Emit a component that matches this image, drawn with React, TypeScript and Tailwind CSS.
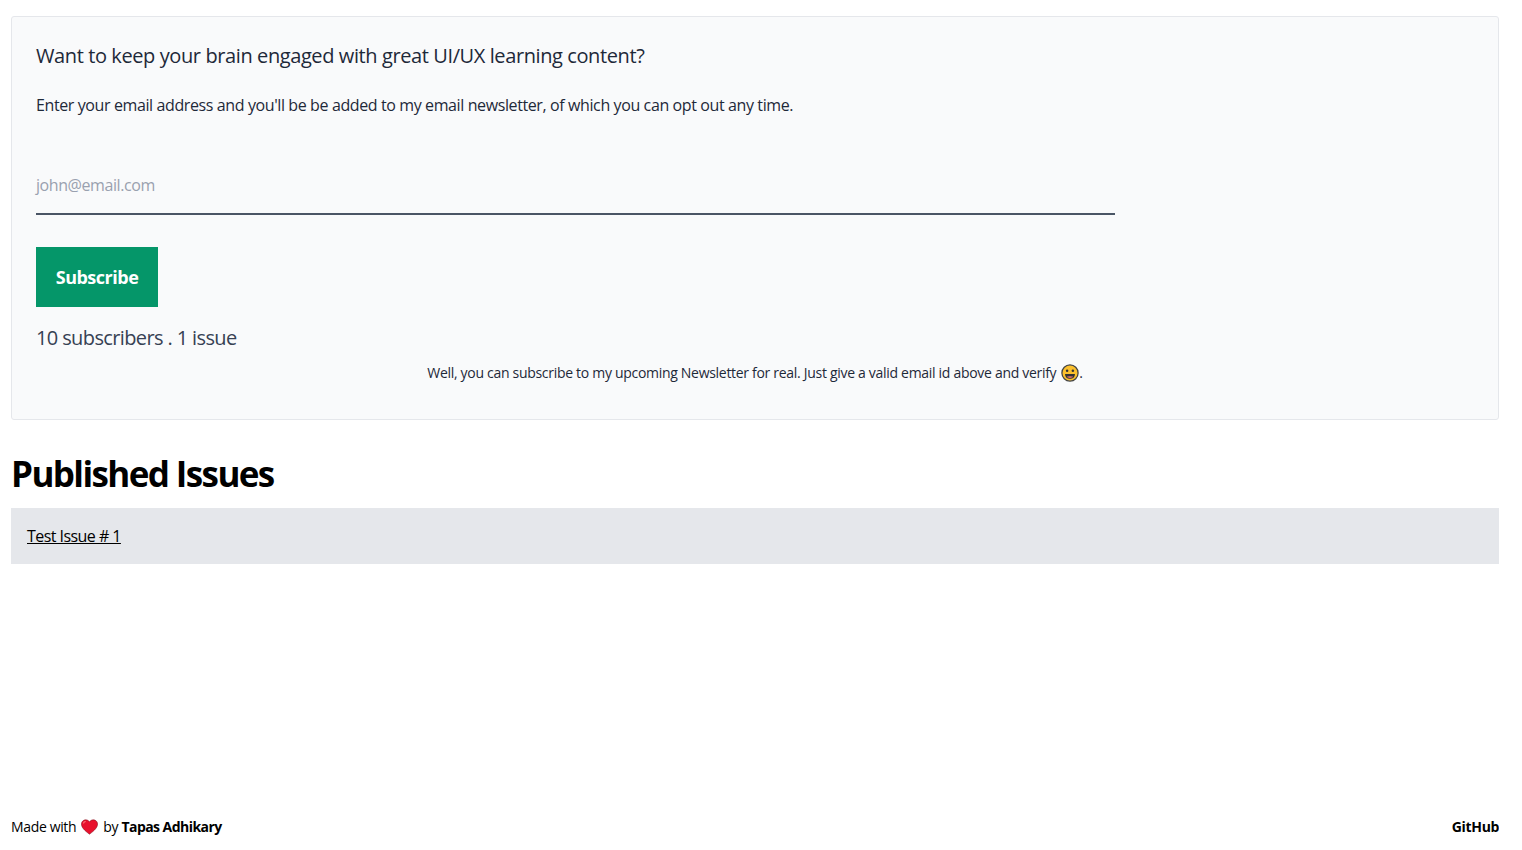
export default function App() {
  return (
    <div className="flex h-[850px] w-[1488px] ml-[11px] flex-col font-['Open_Sans','Noto_Sans',sans-serif] text-black overflow-hidden">
      <div className="mt-4 h-[404px] rounded-[3px] border border-gray-200 bg-gray-50 px-6 pt-[25px] text-gray-800">
        <p className="text-[20px] leading-7 tracking-[-0.4px]">Want to keep your brain engaged with great UI/UX learning content?</p>
        <p className="mt-[23px] text-base leading-6 tracking-[-0.39px]">Enter your email address and you'll be be added to my email newsletter, of which you can opt out any time.</p>
        <div className="mt-[56px] h-[42px] w-[1079px] border-b-2 border-gray-600 text-base leading-6 text-gray-400 tracking-[-0.42px]">john@email.com</div>
        <button className="mt-8 block h-[60px] w-[122px] bg-[#059669] text-lg font-bold text-white tracking-[-0.5px]">Subscribe</button>
        <p className="mt-[17px] text-[20px] leading-7 text-gray-700 tracking-[-0.62px]">10 subscribers . 1 issue</p>
        <div className="mt-[11px] flex items-center justify-center text-sm leading-5 tracking-[-0.3px]">
          <span>Well, you can subscribe to my upcoming Newsletter for real. Just give a valid email id above and verify</span>
          <svg viewBox="0 0 20 20" className="ml-[5px] h-[18px] w-[18px]">
            <circle cx="10" cy="10" r="9" fill="#fbc02d" stroke="#444" strokeWidth="1.4" />
            <circle cx="6.8" cy="7.5" r="1.4" fill="#333" />
            <circle cx="13.2" cy="7.5" r="1.4" fill="#333" />
            <path d="M4.5 11h11c0 3.5-2.5 5.5-5.5 5.5S4.5 14.5 4.5 11z" fill="#333" />
            <path d="M6.5 14.3c1-.8 6-.8 7 0-1 1.5-6 1.5-7 0z" fill="#e57373" />
          </svg>
          <span>.</span>
        </div>
      </div>
      <h1 className="mt-[30px] text-[35px] font-bold leading-[48px] tracking-[-1.6px]">Published Issues</h1>
      <div className="mt-[10px] flex h-14 items-center bg-gray-200 px-4 text-base tracking-[-0.55px]">
        <a className="underline">Test Issue # 1</a>
      </div>
      <footer className="mt-auto mb-[13px] flex items-center justify-between text-sm leading-5 tracking-[-0.35px]">
        <div className="flex items-center">
          <span>Made with</span>
          <svg viewBox="0 0 20 18" className="ml-[5px] mr-[5px] h-[16px] w-[17px]">
            <path d="M10 17.5C4 13 .5 9.500.5 5.500.5 2.500 3 .5 5.500.5 7.500.5 9 1.500 10 3c1-1.500 2.500-2.500 4.500-2.500 2.500 0 5 2 5 5 0 4-3.500 7.500-9.500 12z" fill="#e8112d" stroke="#7a0a18" strokeWidth="0.6" />
            <path d="M3 5c0-1.500 1-2.500 2.500-2.500" stroke="#f77" strokeWidth="1.200" fill="none" />
          </svg>
          <span>by <b className="tracking-[-0.55px]">Tapas Adhikary</b></span>
        </div>
        <b>GitHub</b>
      </footer>
    </div>
  );
}
